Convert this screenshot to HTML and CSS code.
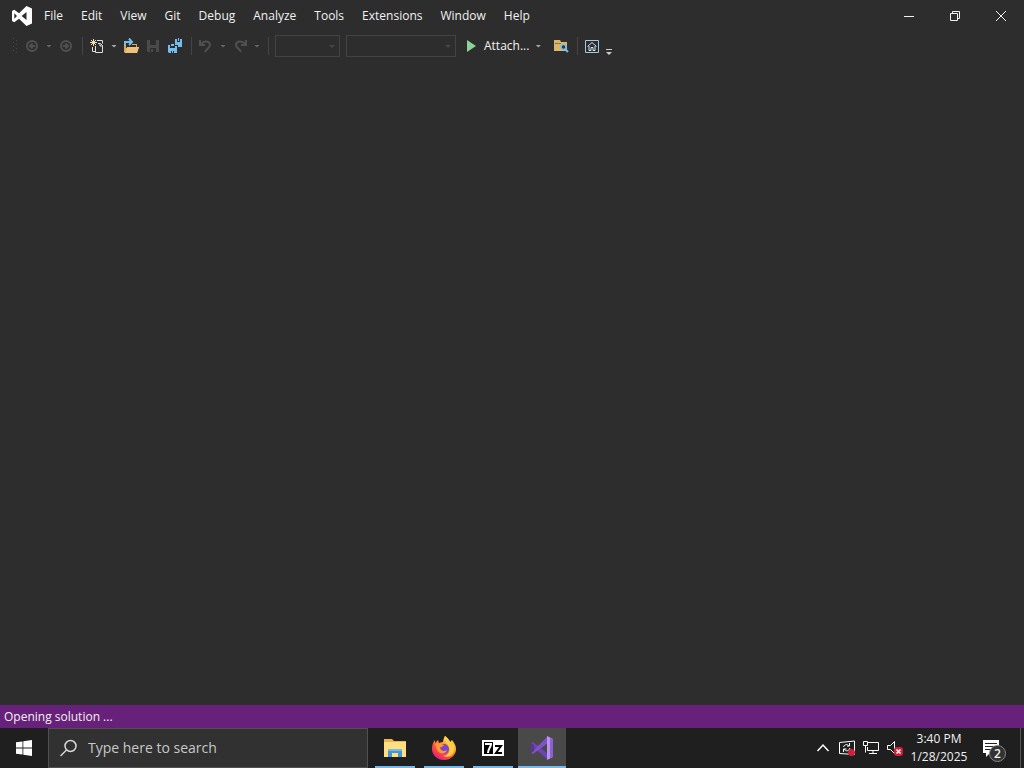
FILE: index.html
```html
<!DOCTYPE html>
<html lang="en">

<head>
  <meta charset="UTF-8">
  <meta name="viewport" content="width=device-width, initial-scale=1.0">
  <title>Visual Studio</title>
  <link rel="stylesheet" href="styles.css">
</head>

<body>
  <header class="titlebar">
    <svg class="logo" viewBox="0 0 20 20" aria-hidden="true">
      <path fill="#fff" fill-rule="evenodd" d="M14.500 0 20 2.500v15L14.500 20 7 12.700 2.300 16.300 0 15V5l2.300-1.300L7 7.300zM14.500 6 9.600 10l4.900 4zM2.300 7.300v5.400L5 10z"/>
    </svg>
    <nav class="menu">
      <button>File</button>
      <button>Edit</button>
      <button>View</button>
      <button>Git</button>
      <button>Debug</button>
      <button>Analyze</button>
      <button>Tools</button>
      <button>Extensions</button>
      <button>Window</button>
      <button>Help</button>
    </nav>
    <div class="window-controls">
      <button aria-label="Minimize"><svg viewBox="0 0 12 12"><path d="M1 6.500h10"/></svg></button>
      <button aria-label="Restore"><svg viewBox="0 0 12 12"><path d="M1.500 3.500h7v7h-7zM3.500 3.500v-2h7v7h-2"/></svg></button>
      <button aria-label="Close"><svg viewBox="0 0 12 12"><path d="m1 1 10 10M11 1 1 11"/></svg></button>
    </div>
  </header>

  <div class="toolbar">
    <svg class="grip" viewBox="0 0 6 16" aria-hidden="true"><path stroke="#4a4a4a" stroke-dasharray="1 3" d="M1.500 0v16M4.500 2v14"/></svg>
    <button class="tool" aria-label="Back" disabled><svg viewBox="0 0 16 16"><circle cx="8" cy="8" r="5" fill="none" stroke="#505050" stroke-width="2"/><path fill="none" stroke="#505050" stroke-width="2" d="M11 8H6M8.500 5.500 6 8l2.500 2.500"/></svg></button>
    <button class="caret" aria-label="Back history"></button>
    <button class="tool" aria-label="Forward" disabled><svg viewBox="0 0 16 16"><circle cx="8" cy="8" r="5" fill="none" stroke="#505050" stroke-width="2"/><path fill="none" stroke="#505050" stroke-width="2" d="M5 8h5M7.500 5.500 10 8l-2.500 2.500"/></svg></button>
    <span class="separator"></span>
    <button class="tool" aria-label="New project"><svg viewBox="0 0 16 16"><path fill="none" stroke="#ddd" d="M8 2.500h5.500v3M3.500 9v4.500h3M6.500 8v6.500h7v-7l-2-2H9M11 5.500v2.500h2.500"/><path fill="none" stroke="#f1dfb6" d="M4.500 1v7M1 4.500h7M2 2l5 5M7 2 2 7"/></svg></button>
    <button class="caret light" aria-label="New project options"></button>
    <button class="tool" aria-label="Open file"><svg viewBox="0 0 16 16"><path fill="#d8a75b" d="M1 7h2v3h10V7H9V6h5v3h2l-2 6H2L1 14z"/><path fill="#edc17b" d="M4 9h12l-2 6H2z"/><path fill="none" stroke="#75bdec" stroke-width="2" d="M2 7V4h6M6 .500 9 4 6 7"/></svg></button>
    <button class="tool" aria-label="Save" disabled><svg viewBox="0 0 16 16"><path fill="#4a4a4a" fill-rule="evenodd" d="M2 2h12v12H3l-1-1zm3 0v5h6V2zm0 8v4h6v-4zm1 1h2v3H6z"/></svg></button>
    <button class="tool" aria-label="Save all"><svg viewBox="0 0 16 16"><path fill="#75bdec" d="M1 7h2v3h5V8h2v7H7v-2H6v2H5v-2H4v2H2l-1-1zM4 6h3v2H4zM8 1h2v3h3V1h2v8h-4V7H8zM11 0h1v3h-1z"/></svg></button>
    <span class="separator"></span>
    <button class="tool" aria-label="Undo" disabled><svg viewBox="0 0 16 16"><path fill="none" stroke="#505050" stroke-width="2" d="M2 2v5h5M3 6c3-4 9-3 9 1 0 3-3 3-5 7"/></svg></button>
    <button class="caret" aria-label="Undo history"></button>
    <button class="tool" aria-label="Redo" disabled><svg viewBox="0 0 16 16"><path fill="none" stroke="#505050" stroke-width="2" d="M14 2v5H9M13 6C10 2 4 3 4 7c0 3 3 3 5 7"/></svg></button>
    <button class="caret" aria-label="Redo history"></button>
    <span class="separator"></span>
    <div class="combo config">
      <select aria-label="Solution configuration" disabled><option></option></select>
    </div>
    <div class="combo platform">
      <select aria-label="Solution platform" disabled><option></option></select>
    </div>
    <button class="attach"><svg viewBox="0 0 16 16" aria-hidden="true"><path fill="#8ad39a" d="M5 2v12l9-6z"/></svg>Attach...<span class="caret light"></span></button>
    <button class="tool find" aria-label="Find in files"><svg viewBox="0 0 16 16"><path fill="#dcb56c" d="M1 2h6l1 2h6v9H1z"/><path stroke="#8f7543" d="M2 5.500h6"/><circle cx="10.500" cy="9" r="2.500" fill="#333" stroke="#75bdec" stroke-width="1.500"/><path stroke="#75bdec" stroke-width="2" d="m12 11 3 3"/></svg></button>
    <span class="separator"></span>
    <button class="tool" aria-label="Start window"><svg viewBox="0 0 16 16" fill="none"><path stroke="#9ccbe5" d="M1.500 2.500h13v12h-13z"/><path stroke="#d5e4ed" d="m3.500 8.500 4.500-4 4.500 4M5 8v4.500h2v-3h2v3h2V8"/></svg></button>
    <button class="overflow" aria-label="Toolbar options"><svg viewBox="0 0 6 10"><path fill="#ccc" d="M0 3h6v1H0zM0 6h6L3 9z"/></svg></button>
  </div>

  <main class="workspace"></main>

  <footer class="statusbar">Opening solution ...</footer>

  <div class="taskbar">
    <button class="start" aria-label="Start"><svg viewBox="0 0 16 16"><path fill="#fff" d="m0 2.300 6.500-.900v6.100H0zM7.300 1.200 16 0v7.500H7.300zM0 8.400h6.500v6.200L0 13.700zM7.300 8.400H16V16l-8.700-1.200z"/></svg></button>
    <label class="search">
      <svg viewBox="0 0 18 18" aria-hidden="true"><circle cx="10.500" cy="7" r="5.500"/><path d="m6.500 11-6 6"/></svg>
      <input type="text" placeholder="Type here to search" aria-label="Search">
    </label>

    <div class="apps">
      <button class="app" aria-label="File Explorer"><svg viewBox="0 0 24 24"><path fill="#e9b84c" d="M1 3h8l2 2h12v16H1z"/><path fill="#ffdf80" d="M1 6h22v15H1z"/><path fill="#4396d2" d="M5 13h14v8h-4v-4H9v4H5z"/><path fill="#77bae5" d="M5 13h14v2H5z"/></svg></button>
      <button class="app" aria-label="Firefox">
        <svg viewBox="0 0 24 24">
          <defs>
            <linearGradient id="flame" x1=".9" y1="0" x2=".2" y2="1">
              <stop offset="0" stop-color="#fff44f"/>
              <stop offset=".35" stop-color="#ffad32"/>
              <stop offset=".65" stop-color="#ff5338"/>
              <stop offset="1" stop-color="#e31587"/>
            </linearGradient>
          </defs>
          <path fill="url(#flame)" d="M13 0c3 2 4 4 5 6l2-2c2 3 4 5 4 9 0 6-5 11-12 11S0 19 0 13c0-4 1-7 3-9v3l3-3 1 3c2-1 3-1 4-1 0-2 1-4 2-6z"/>
          <circle cx="12" cy="13" r="5" fill="#8046c8"/>
          <path fill="#ff9a32" d="M3 8c4-2 6 0 9 1-1 2-4 2-4 3 1 3 4 4 7 2-1 4-7 5-10 0z"/>
          <path fill="#ffd044" d="M13 0c-3 5 3 7 4 11 2 5-2 9-6 9 8 3 12-3 11-10-1-3-3-2-4-4-1-3-3-4-5-6z"/>
        </svg>
      </button>
      <button class="app" aria-label="7-Zip"><svg viewBox="0 0 24 24"><path fill="#fff" d="M1 4h22v16H1z"/><path fill="#000" d="M3 6h9v12H3z"/><path fill="none" stroke="#fff" stroke-width="2" d="M4 8h6c0 3-3 5-3 9"/><path fill="none" stroke="#000" stroke-width="2" d="M14 10h6l-5 7h6"/></svg></button>
      <button class="app active" aria-label="Visual Studio"><svg viewBox="0 0 24 24"><path fill="#7043b5" d="m1 7 2-1 15 12v6L1 9z"/><path fill="#8052c8" d="m1 17 17-17v7L3 18l-2-1z"/><path fill="#5a3593" d="M1 7l3 2v6l-3 2z"/><path fill="#b895f3" d="m17 0 6 3v18l-6 3z"/><path fill="#8d60d2" d="m20 2 3 1v18l-3 1z"/></svg></button>
    </div>

    <div class="tray">
      <button aria-label="Show hidden icons"><svg viewBox="0 0 16 16"><path stroke-width="1.500" d="m2.500 11 5.500-6 5.500 6"/></svg></button>
      <button aria-label="Update status"><svg viewBox="0 0 16 16"><path d="M.500 2.500 15.500 1v13.500l-15-1z"/><path d="M4.500 7c1-3 4-3 5.500-1M10.500 3v3H8M11 8c-1 3-4 4-6 1M4.500 12V9h3"/><circle class="alert" cx="12.500" cy="12.500" r="3.500"/></svg></button>
      <button aria-label="Network"><svg viewBox="0 0 16 16"><path d="M5 2.500h10.500v8H4.500V7M.500 1.500h4v4h-4zM2.500 5.500v7M10 10.500v3M6 13.500h8"/></svg></button>
      <button aria-label="Volume muted"><svg viewBox="0 0 16 16"><path d="M.500 5.500h3l4-4v12l-4-4h-3z"/><rect class="alert" x="7" y="7" width="9" height="9" rx="3"/><path stroke-width="1.500" d="m9.500 9.500 4 4M13.500 9.500l-4 4"/></svg></button>
      <button class="clock"><time>3:40 PM</time><time>1/28/2025</time></button>
      <button class="notifications" aria-label="2 notifications">
        <svg viewBox="0 0 18 18"><path fill="#fff" d="M1 1h16v13h-9l-4 4v-4H1z"/><path stroke="#222" d="M3 4.500h12M3 7.500h12M3 10.500h8"/></svg>
        <span class="badge">2</span>
      </button>
      <button class="show-desktop" aria-label="Show desktop"></button>
    </div>
  </div>
</body>

</html>
```
FILE: styles.css
```css
* {
  box-sizing: border-box;
}

body {
  margin: 0;
  min-height: 100vh;
  display: flex;
  flex-direction: column;
  background-color: #2d2d2d;
  color: #f1f1f1;
  font-family: "Open Sans", "Noto Sans", sans-serif;
  font-size: 12px;
  line-height: 18px;
}

button {
  padding: 0;
  border: none;
  background: none;
  color: inherit;
  font: inherit;
}

svg {
  display: block;
  flex: none;
}

/* Title bar */
.titlebar {
  display: flex;
  align-items: center;
  height: 32px;
  padding-left: 12px;
}

.logo {
  width: 20px;
  height: 20px;
}

.menu {
  display: flex;
  gap: 18px;
  margin-left: 12px;
}

.window-controls {
  display: flex;
  margin-left: auto;
}

.window-controls button {
  display: flex;
  align-items: center;
  justify-content: center;
  width: 46px;
  height: 32px;
}

.window-controls svg {
  width: 12px;
  height: 12px;
  fill: none;
  stroke: #f1f1f1;
}

/* Toolbar */
.toolbar {
  display: flex;
  align-items: center;
  gap: 6px;
  height: 28px;
  padding-left: 12px;
}

.tool svg,
.attach svg {
  width: 16px;
  height: 16px;
}

.grip {
  width: 6px;
  height: 16px;
}

.caret {
  width: 6px;
  height: 3px;
  background-color: #666;
  clip-path: polygon(0 0, 100% 0, 50% 100%);
}

.caret.light {
  background-color: #aaa;
}

.separator {
  width: 3px;
  height: 18px;
  border-right: 1px solid #454545;
}

.combo {
  position: relative;
  height: 22px;
  border: 1px solid #434343;
}

.combo::after {
  content: "";
  position: absolute;
  top: 9px;
  right: 4px;
  width: 6px;
  height: 3px;
  background-color: #484848;
  clip-path: polygon(0 0, 100% 0, 50% 100%);
}

.combo select {
  display: block;
  width: 100%;
  height: 100%;
  border: none;
  background: none;
  appearance: none;
}

.config {
  width: 65px;
}

.platform {
  width: 110px;
}

.attach {
  display: flex;
  align-items: center;
  gap: 6px;
}

.find {
  margin-left: 6px;
}

.overflow svg {
  width: 6px;
  height: 10px;
}

.overflow {
  align-self: flex-end;
  padding-bottom: 4px;
}

.workspace {
  flex: 1;
}

.statusbar {
  height: 23px;
  padding: 3px 4px;
  background-color: #68217a;
}

/* Taskbar */
.taskbar {
  display: flex;
  height: 40px;
  background-color: #1e1f1e;
}

.start {
  display: flex;
  align-items: center;
  justify-content: center;
  width: 48px;
}

.start svg {
  width: 16px;
  height: 16px;
}

.search {
  display: flex;
  align-items: center;
  gap: 10px;
  width: 320px;
  padding: 0 11px;
  border: 1px solid #505050;
  background-color: #303130;
}

.search svg {
  width: 18px;
  height: 18px;
  fill: none;
  stroke: #d8d8d8;
  stroke-width: 1.5;
}

.search input {
  flex: 1;
  min-width: 0;
  padding: 0;
  border: none;
  outline: none;
  background: none;
  color: #fff;
  font: inherit;
  font-size: 14px;
}

.search input::placeholder {
  color: #c8c8c8;
}

.apps {
  display: flex;
  gap: 1px;
  margin-left: 3px;
}

.app {
  position: relative;
  display: flex;
  align-items: center;
  justify-content: center;
  width: 48px;
}

.app svg {
  width: 24px;
  height: 24px;
}

.app::after {
  content: "";
  position: absolute;
  right: 4px;
  bottom: 0;
  left: 4px;
  height: 2px;
  background-color: #76b9ed;
}

.app.active {
  background-color: #484948;
}

.app.active::after {
  right: 0;
  left: 0;
}

.tray {
  display: flex;
  align-items: center;
  gap: 8px;
  margin-left: auto;
}

.tray svg {
  width: 16px;
  height: 16px;
  fill: none;
  stroke: #fff;
}

.tray .alert {
  fill: #d3203a;
  stroke: none;
}

.clock {
  display: flex;
  flex-direction: column;
  align-items: center;
  width: 56px;
}

.tray .notifications {
  position: relative;
  margin: 0 12px 0 7px;
}

.tray .notifications svg {
  width: 18px;
  height: 18px;
  stroke: none;
}

.badge {
  position: absolute;
  top: 6px;
  left: 7px;
  width: 17px;
  height: 17px;
  border: 1px solid #888;
  border-radius: 50%;
  background-color: #333;
  font-weight: 600;
  line-height: 15px;
  text-align: center;
}

.show-desktop {
  align-self: stretch;
  width: 4px;
  border-left: 1px solid #555;
}
```
